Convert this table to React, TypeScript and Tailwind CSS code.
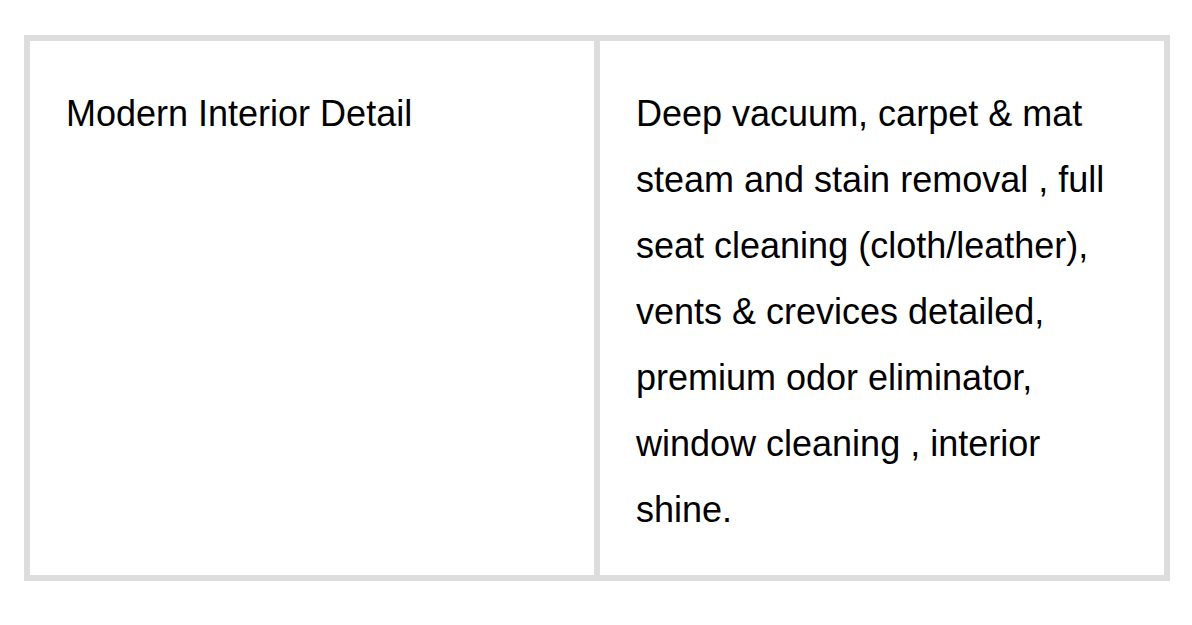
export default function App() {
  return (
    <div className="min-h-screen bg-white pt-[35px] pl-[24px] font-['Liberation_Sans',Arial,sans-serif] text-black">
      <div className="grid w-[1146px] grid-cols-[564px_570px] border-[6px] border-[#dddddd]">
        <div className="px-9 pt-[40px] pb-[32px] text-[36px] leading-[66px]">Modern Interior Detail</div>
        <div className="border-l-[6px] border-[#dddddd] px-9 pt-[40px] pb-[32px] text-[36px] leading-[66px]">
          Deep vacuum, carpet &amp; mat steam and stain removal , full seat cleaning (cloth/leather), vents &amp;
          crevices detailed, premium odor eliminator, window cleaning , interior shine.
        </div>
      </div>
    </div>
  );
}
